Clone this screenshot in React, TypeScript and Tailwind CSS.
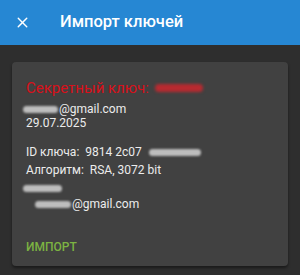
import { X } from "lucide-react";

// stand-in for the blurred-out personal details in the screenshot
function Smudge({ className }: { className: string }) {
  return <span className={`inline-block h-[7px] rounded-full bg-[#bdbdbd] blur-[1.2px] ${className}`} />;
}

export default function App() {
  return (
    <div className="h-[275px] w-[300px] overflow-hidden bg-[#2e2e2e] font-['Roboto',sans-serif] text-[#ececec]">
      <header className="flex h-[45px] items-center bg-[#2687d3] pl-[14px]">
        <X size={17} strokeWidth={2} className="text-white" />
        <h1 className="ml-[29px] text-[16.5px] font-medium text-white">Импорт ключей</h1>
      </header>

      <div className="px-3 pt-[17px]">
        <div className="h-[204px] rounded-sm bg-[#414141] pl-[14px] pt-4 shadow-[0_2px_3px_rgba(0,0,0,0.45)]">
          <div className="flex items-center text-[15px] leading-[20px] text-[#d8101a]">
            Секретный ключ:
            <span className="ml-[6px] inline-block h-[8px] w-[48px] rounded-full bg-[#b82a30] blur-[1.5px]" />
          </div>
          <div className="mt-1 flex items-center text-[12px] leading-[14px]">
            <Smudge className="-ml-[3px] mr-px w-[35px]" />
            @gmail.com
          </div>
          <div className="text-[12px] leading-[14px]">29.07.2025</div>

          <div className="mt-[15px] flex items-center whitespace-pre text-[12px] leading-[14px]">
            ID ключа:  9814 2c07
            <Smudge className="ml-[7px] w-[52px]" />
          </div>
          <div className="mt-1 whitespace-pre text-[12px] leading-[14px]">Алгоритм:  RSA, 3072 bit</div>
          <div className="mt-1 flex h-[14px] items-center">
            <Smudge className="-ml-[3px] w-[39px]" />
          </div>
          <div className="mt-[2px] flex items-center pl-[9px] text-[12px] leading-[14px]">
            <Smudge className="mr-px w-[36px]" />
            @gmail.com
          </div>

          <button className="mt-[29px] block text-[12px] font-medium leading-[14px] text-[#7cb342]">ИМПОРТ</button>
        </div>
      </div>
    </div>
  );
}
